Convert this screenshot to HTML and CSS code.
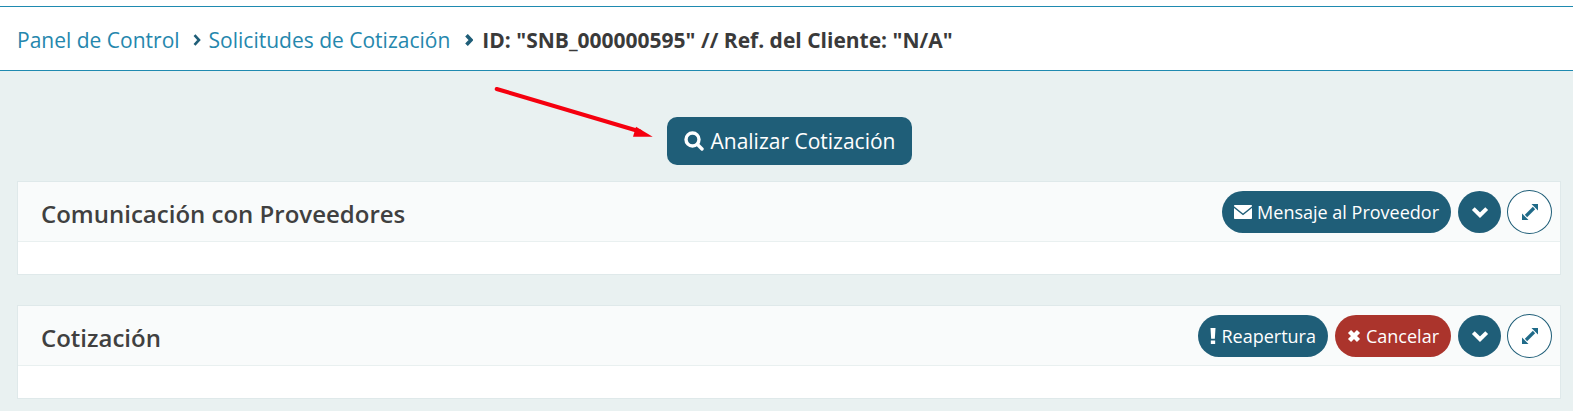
FILE: index.html
```html
<!DOCTYPE html>
<html lang="es">
<head>
<meta charset="utf-8">
<title>Solicitud de Cotización</title>
<link rel="stylesheet" href="styles.css">
</head>
<body>
<nav class="crumbs">
  <a class="crumb">Panel de Control</a>
  <svg class="chev" viewBox="0 0 8 12"><path d="M1.500 1.200 6 6l-4.500 4.800" /></svg>
  <a class="crumb">Solicitudes de Cotización</a>
  <svg class="chev chev-bold" viewBox="0 0 8 12"><path d="M1.500 1.200 6 6l-4.500 4.800" /></svg>
  <strong class="current">ID: "SNB_000000595" // Ref. del Cliente: "N/A"</strong>
</nav>
<main class="content">
  <svg class="arrow" viewBox="0 0 170 60" aria-hidden="true">
    <path class="arrow-line" d="M2.700 1 146 43.500"/>
    <path class="arrow-head" d="M158.700 48.700 139 48.700 142 38.700z"/>
  </svg>
  <div class="action-row">
    <button class="analyze">
      <svg class="ico-search" viewBox="0 0 20 20"><circle cx="8.500" cy="8.500" r="6.500"/><path d="M13.500 13.500 18 18"/></svg>
      <span>Analizar Cotización</span>
    </button>
  </div>
  <section class="panel">
    <header class="panel-head">
      <h2>Comunicación con Proveedores</h2>
      <div class="tools">
        <button class="pill">
          <svg class="ico-mail" viewBox="0 0 18 14"><path d="M.8 0h16.400c.5 0 .8.300.8.800v.400L9 8.400 0 1.200V.8C0 .3.300 0 .8 0z"/><path d="M0 3l9 7.200L18 3v10.200c0 .5-.3.800-.8.800H.8c-.5 0-.8-.3-.8-.8z"/></svg>
          <span>Mensaje al Proveedor</span>
        </button>
        <button class="round"><svg class="ico-down" viewBox="0 0 18 12"><path d="M2.300 2.600 9 9.200l6.700-6.600"/></svg></button>
        <button class="round outline"><svg class="ico-expand" viewBox="0 0 16 16"><path class="l" d="M4 12 12 4"/><path d="M9.500 0H16v6.500zM0 9.500V16h6.500z"/></svg></button>
      </div>
    </header>
    <div class="panel-body"></div>
  </section>
  <section class="panel">
    <header class="panel-head">
      <h2>Cotización</h2>
      <div class="tools">
        <button class="pill">
          <svg class="ico-bang" viewBox="0 0 5 14"><path d="M.3 0h4.400l-.6 9.500H.9zM.6 11h3.800v3H.6z"/></svg>
          <span>Reapertura</span>
        </button>
        <button class="pill danger">
          <svg class="ico-x" viewBox="0 0 14 14"><path d="M2.500 2.500l9 9M11.500 2.500l-9 9"/></svg>
          <span>Cancelar</span>
        </button>
        <button class="round"><svg class="ico-down" viewBox="0 0 18 12"><path d="M2.300 2.600 9 9.200l6.700-6.600"/></svg></button>
        <button class="round outline"><svg class="ico-expand" viewBox="0 0 16 16"><path class="l" d="M4 12 12 4"/><path d="M9.500 0H16v6.500zM0 9.500V16h6.500z"/></svg></button>
      </div>
    </header>
    <div class="panel-body"></div>
  </section>
</main>
</body>
</html>
```

FILE: styles.css
```css
* { box-sizing: border-box; }
html, body { margin: 0; height: 100%; }
body {
  background: #e9f1f1;
  font-family: "Open Sans", "Liberation Sans", sans-serif;
  color: #3a3a3a;
  overflow: hidden;
}
.crumbs {
  margin-top: 6px;
  height: 65px;
  background: #fff;
  border-top: 1px solid #1f8ab0;
  border-bottom: 1px solid #1f8ab0;
  box-shadow: 0 -6px 0 #fff;
  display: flex;
  align-items: center;
  padding: 3px 0 0 17px;
  font-size: 21px;
}
.crumb { color: #2587ad; }
.chev {
  width: 8px;
  height: 12px;
  margin: 0 8px 0 13px;
  fill: none;
  stroke: #1f5e78;
  stroke-width: 2.600;
}
.chev-bold { stroke-width: 3.600; margin: 0 9px 0 15px; }
.current { font-weight: 700; color: #3a3a3a; }
.content { position: relative; padding: 46px 12px 0 17px; }
.arrow {
  position: absolute;
  left: 494px;
  top: 17px;
  width: 170px;
  height: 60px;
  overflow: visible;
}
.arrow-line { stroke: #f5000f; stroke-width: 4; stroke-linecap: round; fill: none; }
.arrow-head { fill: #f5000f; }
.action-row { display: flex; justify-content: center; margin-bottom: 16px; }
.analyze {
  height: 48px;
  margin-left: 1px;
  display: flex;
  align-items: center;
  gap: 6px;
  padding: 0 16px 0 17px;
  background: #1f5e78;
  color: #fff;
  border: 0;
  border-radius: 10px;
  font: 400 21px "Open Sans", sans-serif;
}
.ico-search { width: 20px; height: 20px; fill: none; stroke: #fff; stroke-width: 3.400; stroke-linecap: round; }
.panel {
  background: #fff;
  border: 1px solid #dfe9ea;
  height: 94px;
  margin-bottom: 30px;
}
.panel-head {
  height: 60px;
  background: #f9fbfb;
  border-bottom: 1px solid #e9f0f0;
  display: flex;
  align-items: center;
  justify-content: space-between;
  padding: 0 8px 0 23px;
}
.panel-head h2 { margin: 4px 0 0; font-size: 24px; font-weight: 600; color: #404040; }
.tools { display: flex; align-items: center; gap: 7px; }
.pill {
  height: 42px;
  border: 0;
  border-radius: 21px;
  background: #1f5e78;
  color: #fff;
  display: flex;
  align-items: center;
  gap: 5px;
  padding: 0 12px;
  font: 400 18px "Open Sans", sans-serif;
}
.danger { background: #ab342c; }
.round {
  width: 43px;
  height: 42px;
  border-radius: 50%;
  border: 0;
  background: #1f5e78;
  padding: 0;
  display: flex;
  align-items: center;
  justify-content: center;
}
.round.outline { width: 45px; height: 44px; margin-left: -1px; background: #fff; border: 1px solid #1f5e78; }
.ico-mail { width: 18px; height: 14px; fill: #fff; }
.ico-bang { width: 6px; height: 16px; fill: #fff; }
.ico-x { width: 14px; height: 14px; fill: none; stroke: #fff; stroke-width: 4.400; }
.ico-down { width: 18px; height: 12px; fill: none; stroke: #fff; stroke-width: 4; }
.ico-expand { width: 16px; height: 16px; fill: #1f6a88; }
.ico-expand .l { stroke: #1f6a88; stroke-width: 3.200; fill: none; }
```
